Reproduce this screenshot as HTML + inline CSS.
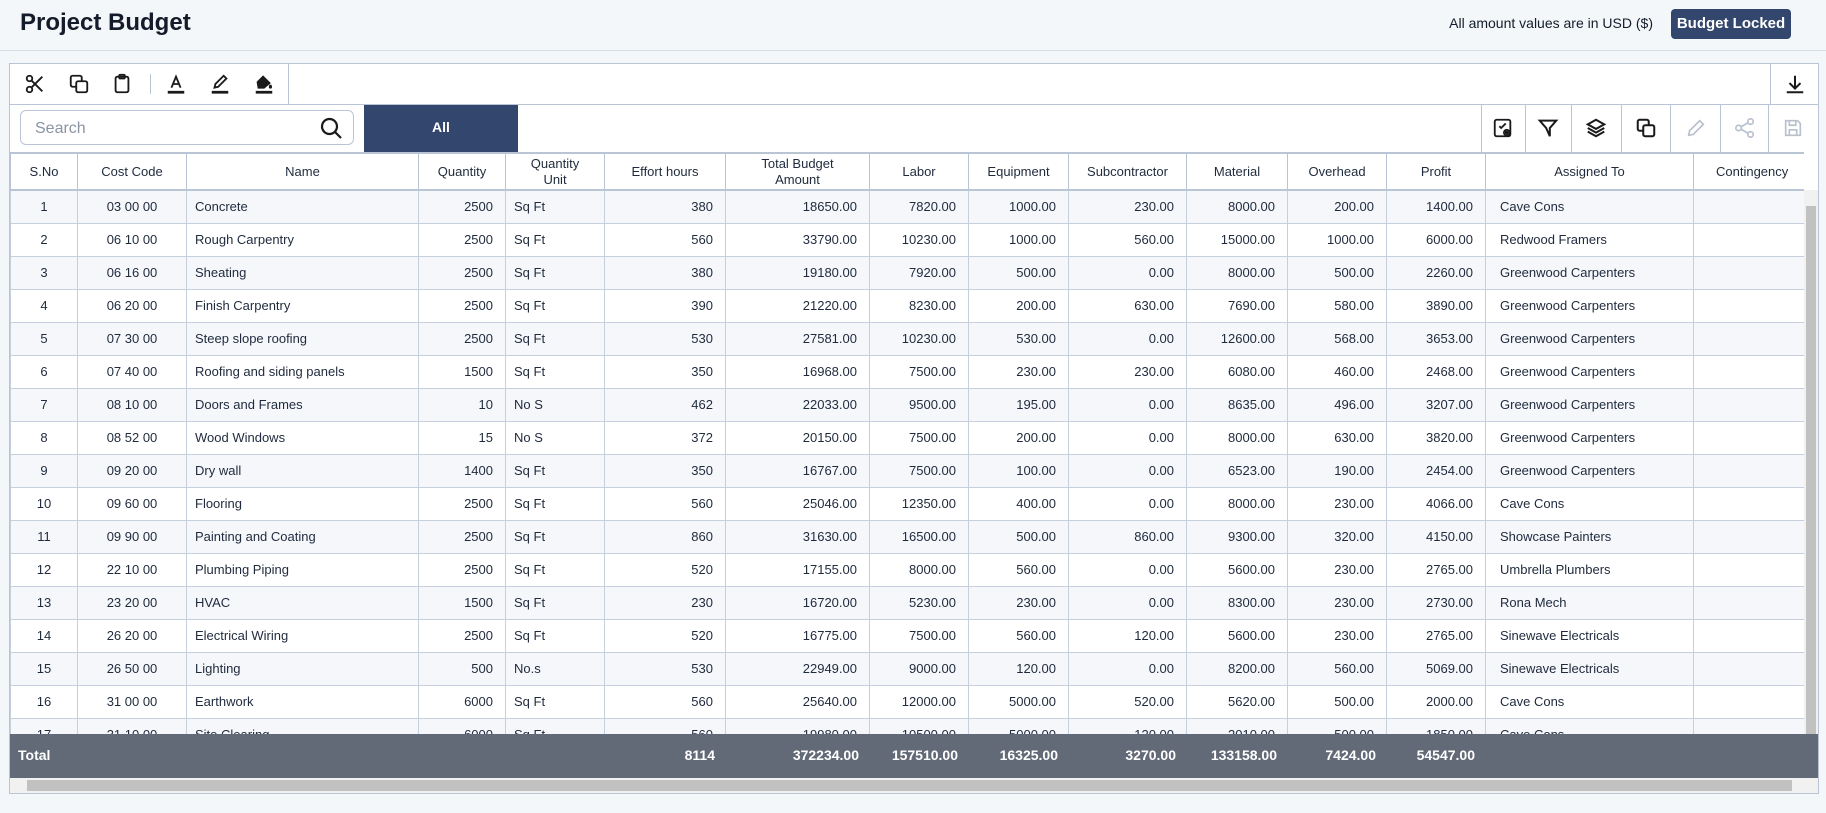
<!DOCTYPE html>
<html><head><meta charset="utf-8"><style>
*{box-sizing:border-box;margin:0;padding:0}
body{width:1826px;height:813px;background:#f4f7fa;font-family:"Liberation Sans",sans-serif;color:#1f2a3c;position:relative;overflow:hidden}
.hdr{position:absolute;left:0;top:0;width:1826px;height:51px;border-bottom:1px solid #d5dce5;background:#f4f7fa}
.title{position:absolute;left:20px;top:9px;font-size:24px;font-weight:bold;color:#141c2b}
.usd{position:absolute;right:173px;top:15px;font-size:14px;color:#141c2b}
.btn{position:absolute;left:1671px;top:9px;width:120px;height:30px;background:#33466d;border-radius:4px;color:#fff;font-weight:bold;font-size:15px;text-align:center;line-height:30px}
.panel{position:absolute;left:9px;top:63px;width:1810px;height:731px;background:#fff;border:1px solid #b9c5d4}
.tb{position:absolute;left:0;top:0;width:1808px;height:41px;border-bottom:1px solid #b9c5d4}
.ic{position:absolute;top:9px;width:22px;height:22px}
.row2{position:absolute;left:0;top:41px;width:1808px;height:47px}
.search{position:absolute;left:10px;top:5px;width:334px;height:35px;border:1px solid #b9c5d4;border-radius:6px;font-size:16px;color:#8a94a3;padding:9px 14px}
.all{position:absolute;left:354px;top:0;width:154px;height:47px;background:#33466d;color:#fff;font-weight:bold;font-size:14px;text-align:center;line-height:44px}
.vd{position:absolute;top:0;height:47px;border-left:1px solid #b9c5d4}
.tw{position:absolute;left:0;top:88px;width:1794px;height:583px;overflow:hidden}
table{border-collapse:collapse;table-layout:fixed;font-size:13px;width:1823px}
th{height:37px;border:1px solid #b9c5d4;border-top:2px solid #b9c5d4;border-bottom:2px solid #b9c5d4;font-weight:normal;font-size:13px;color:#1f2a3c;line-height:16px;background:#fff}
td{height:33px;border:1px solid #c6d0dc;padding:0 12px;white-space:nowrap;color:#1f2a3c}
tr:nth-child(odd) td{background:#f5f7fb}
.c{text-align:center}.r{text-align:right}.l{text-align:left;padding-left:8px}
.total{position:absolute;left:0;top:670px;width:1808px;height:44px;background:#626977;color:#fff;font-weight:bold;font-size:14px}
.total span{position:absolute;top:13px}
.hs{position:absolute;left:0;top:714px;width:1808px;height:15px;background:#f1f1f1}
.thumb{position:absolute;left:17px;top:2px;width:1765px;height:11px;background:#c1c1c1}
.vs{position:absolute;left:1794px;top:126px;width:14px;height:588px;background:#f1f1f1}
.vthumb{position:absolute;left:2px;top:16px;width:10px;height:555px;background:#c1c1c1}
</style></head><body>
<div class="hdr"><div class="title">Project Budget</div><div class="usd">All amount values are in USD ($)</div><div class="btn">Budget Locked</div></div>
<div class="panel">
 <div class="tb">
  <svg class="ic" style="left:14px" viewBox="0 0 24 24" fill="none" stroke="#1a1a1a" stroke-width="2"><circle cx="6" cy="6" r="3"/><circle cx="6" cy="18" r="3"/><path d="M8.1 8.1 20 20M8.1 15.9 20 4"/></svg>
  <svg class="ic" style="left:58px" viewBox="0 0 24 24" fill="none" stroke="#1a1a1a" stroke-width="2"><rect x="3" y="3" width="12" height="12" rx="2"/><rect x="9" y="9" width="12" height="12" rx="2" fill="#fff"/></svg>
  <svg class="ic" style="left:101px" viewBox="0 0 24 24" fill="none" stroke="#1a1a1a" stroke-width="2"><rect x="5" y="4" width="14" height="17" rx="2"/><rect x="9" y="2" width="6" height="4" rx="1"/></svg>
  <div style="position:absolute;left:140px;top:10px;height:20px;border-left:1px solid #b9c5d4"></div>
  <svg class="ic" style="left:155px" viewBox="0 0 24 24" fill="none" stroke="#1a1a1a" stroke-width="2"><path d="M7 16 12 4l5 12M9 12h6"/><path d="M3 21h18" stroke-width="3"/></svg>
  <svg class="ic" style="left:199px" viewBox="0 0 24 24" fill="none" stroke="#1a1a1a" stroke-width="2"><path d="M6 16l1-4 9-9 3 3-9 9z"/><path d="M3 21h18" stroke-width="3"/></svg>
  <svg class="ic" style="left:243px" viewBox="0 0 24 24" fill="none" stroke="#1a1a1a" stroke-width="2"><path d="M5 10l6-6 7 7-6 5H6z" fill="#1a1a1a"/><path d="M19 13c1 2 1 3 0 3s-1-1 0-3"/><path d="M3 21h18" stroke-width="3"/></svg>
  <div style="position:absolute;left:278px;top:0;height:40px;border-left:1px solid #b9c5d4"></div>
  <div style="position:absolute;left:1760px;top:0;height:40px;border-left:1px solid #b9c5d4"></div>
  <svg class="ic" style="left:1774px" viewBox="0 0 24 24" fill="none" stroke="#1a1a1a" stroke-width="2.2"><path d="M12 3v13M6 11l6 6 6-6M3 21h18"/></svg>
 </div>
 <div class="row2">
  <div class="search">Search</div>
  <svg style="position:absolute;left:309px;top:11px;width:24px;height:24px" viewBox="0 0 24 24" fill="none" stroke="#1a1a1a" stroke-width="2.2"><circle cx="10.5" cy="10.5" r="7.5"/><path d="M16 16l6 6"/></svg>
  <div class="all">All</div>
  <div class="vd" style="left:1471px"></div><div class="vd" style="left:1515px"></div><div class="vd" style="left:1561px"></div><div class="vd" style="left:1611px"></div><div class="vd" style="left:1660px"></div><div class="vd" style="left:1710px"></div><div class="vd" style="left:1758px"></div>
  <svg class="ic" style="left:1482px;top:12px" viewBox="0 0 24 24" fill="none" stroke="#1a1a1a" stroke-width="2"><rect x="3" y="3" width="17" height="18" rx="2"/><path d="M8 10l2 2 5-5"/><circle cx="16" cy="17" r="3" fill="#fff"/><circle cx="16" cy="17" r="1"/></svg>
  <svg class="ic" style="left:1527px;top:12px" viewBox="0 0 24 24" fill="none" stroke="#1a1a1a" stroke-width="2.2"><path d="M3 4h18l-7 8v9l-4-9z"/></svg>
  <svg class="ic" style="left:1575px;top:12px" viewBox="0 0 24 24" fill="none" stroke="#1a1a1a" stroke-width="2.2"><path d="M12 3l9 5-9 5-9-5z"/><path d="M3 12l9 5 9-5M3 16l9 5 9-5"/></svg>
  <svg class="ic" style="left:1625px;top:12px" viewBox="0 0 24 24" fill="none" stroke="#1a1a1a" stroke-width="2.2"><rect x="3" y="3" width="12" height="12" rx="2"/><rect x="9" y="9" width="12" height="12" rx="2" fill="#fff"/></svg>
  <svg class="ic" style="left:1675px;top:12px" viewBox="0 0 24 24" fill="none" stroke="#b8c0cc" stroke-width="1.8"><path d="M4 20l1-5L16 4l4 4L9 19z"/></svg>
  <svg class="ic" style="left:1724px;top:12px" viewBox="0 0 24 24" fill="none" stroke="#b8c0cc" stroke-width="1.8"><circle cx="18" cy="5" r="3"/><circle cx="5" cy="12" r="3"/><circle cx="18" cy="19" r="3"/><path d="M8 10.5l7-4M8 13.5l7 4"/></svg>
  <svg class="ic" style="left:1772px;top:12px" viewBox="0 0 24 24" fill="none" stroke="#b8c0cc" stroke-width="1.8"><path d="M4 4h13l3 3v13H4z"/><path d="M8 4v5h7V4M8 20v-6h8v6"/></svg>
 </div>
 <div class="tw"><table>
 <colgroup><col style="width:67px"><col style="width:109px"><col style="width:232px"><col style="width:87px"><col style="width:99px"><col style="width:121px"><col style="width:144px"><col style="width:99px"><col style="width:100px"><col style="width:118px"><col style="width:101px"><col style="width:99px"><col style="width:99px"><col style="width:208px"><col style="width:140px"></colgroup>
 <thead><tr><th>S.No</th><th>Cost Code</th><th>Name</th><th>Quantity</th><th>Quantity<br>Unit</th><th>Effort hours</th><th>Total Budget<br>Amount</th><th>Labor</th><th>Equipment</th><th>Subcontractor</th><th>Material</th><th>Overhead</th><th>Profit</th><th>Assigned To</th><th style="text-align:left;padding-left:22px">Contingency</th></tr></thead>
 <tbody>
<tr><td class="c">1</td><td class="c">03 00 00</td><td class="l">Concrete</td><td class="r">2500</td><td class="l">Sq Ft</td><td class="r">380</td><td class="r">18650.00</td><td class="r">7820.00</td><td class="r">1000.00</td><td class="r">230.00</td><td class="r">8000.00</td><td class="r">200.00</td><td class="r">1400.00</td><td class="l" style="padding-left:14px">Cave Cons</td><td></td></tr>
<tr><td class="c">2</td><td class="c">06 10 00</td><td class="l">Rough Carpentry</td><td class="r">2500</td><td class="l">Sq Ft</td><td class="r">560</td><td class="r">33790.00</td><td class="r">10230.00</td><td class="r">1000.00</td><td class="r">560.00</td><td class="r">15000.00</td><td class="r">1000.00</td><td class="r">6000.00</td><td class="l" style="padding-left:14px">Redwood Framers</td><td></td></tr>
<tr><td class="c">3</td><td class="c">06 16 00</td><td class="l">Sheating</td><td class="r">2500</td><td class="l">Sq Ft</td><td class="r">380</td><td class="r">19180.00</td><td class="r">7920.00</td><td class="r">500.00</td><td class="r">0.00</td><td class="r">8000.00</td><td class="r">500.00</td><td class="r">2260.00</td><td class="l" style="padding-left:14px">Greenwood Carpenters</td><td></td></tr>
<tr><td class="c">4</td><td class="c">06 20 00</td><td class="l">Finish Carpentry</td><td class="r">2500</td><td class="l">Sq Ft</td><td class="r">390</td><td class="r">21220.00</td><td class="r">8230.00</td><td class="r">200.00</td><td class="r">630.00</td><td class="r">7690.00</td><td class="r">580.00</td><td class="r">3890.00</td><td class="l" style="padding-left:14px">Greenwood Carpenters</td><td></td></tr>
<tr><td class="c">5</td><td class="c">07 30 00</td><td class="l">Steep slope roofing</td><td class="r">2500</td><td class="l">Sq Ft</td><td class="r">530</td><td class="r">27581.00</td><td class="r">10230.00</td><td class="r">530.00</td><td class="r">0.00</td><td class="r">12600.00</td><td class="r">568.00</td><td class="r">3653.00</td><td class="l" style="padding-left:14px">Greenwood Carpenters</td><td></td></tr>
<tr><td class="c">6</td><td class="c">07 40 00</td><td class="l">Roofing and siding panels</td><td class="r">1500</td><td class="l">Sq Ft</td><td class="r">350</td><td class="r">16968.00</td><td class="r">7500.00</td><td class="r">230.00</td><td class="r">230.00</td><td class="r">6080.00</td><td class="r">460.00</td><td class="r">2468.00</td><td class="l" style="padding-left:14px">Greenwood Carpenters</td><td></td></tr>
<tr><td class="c">7</td><td class="c">08 10 00</td><td class="l">Doors and Frames</td><td class="r">10</td><td class="l">No S</td><td class="r">462</td><td class="r">22033.00</td><td class="r">9500.00</td><td class="r">195.00</td><td class="r">0.00</td><td class="r">8635.00</td><td class="r">496.00</td><td class="r">3207.00</td><td class="l" style="padding-left:14px">Greenwood Carpenters</td><td></td></tr>
<tr><td class="c">8</td><td class="c">08 52 00</td><td class="l">Wood Windows</td><td class="r">15</td><td class="l">No S</td><td class="r">372</td><td class="r">20150.00</td><td class="r">7500.00</td><td class="r">200.00</td><td class="r">0.00</td><td class="r">8000.00</td><td class="r">630.00</td><td class="r">3820.00</td><td class="l" style="padding-left:14px">Greenwood Carpenters</td><td></td></tr>
<tr><td class="c">9</td><td class="c">09 20 00</td><td class="l">Dry wall</td><td class="r">1400</td><td class="l">Sq Ft</td><td class="r">350</td><td class="r">16767.00</td><td class="r">7500.00</td><td class="r">100.00</td><td class="r">0.00</td><td class="r">6523.00</td><td class="r">190.00</td><td class="r">2454.00</td><td class="l" style="padding-left:14px">Greenwood Carpenters</td><td></td></tr>
<tr><td class="c">10</td><td class="c">09 60 00</td><td class="l">Flooring</td><td class="r">2500</td><td class="l">Sq Ft</td><td class="r">560</td><td class="r">25046.00</td><td class="r">12350.00</td><td class="r">400.00</td><td class="r">0.00</td><td class="r">8000.00</td><td class="r">230.00</td><td class="r">4066.00</td><td class="l" style="padding-left:14px">Cave Cons</td><td></td></tr>
<tr><td class="c">11</td><td class="c">09 90 00</td><td class="l">Painting and Coating</td><td class="r">2500</td><td class="l">Sq Ft</td><td class="r">860</td><td class="r">31630.00</td><td class="r">16500.00</td><td class="r">500.00</td><td class="r">860.00</td><td class="r">9300.00</td><td class="r">320.00</td><td class="r">4150.00</td><td class="l" style="padding-left:14px">Showcase Painters</td><td></td></tr>
<tr><td class="c">12</td><td class="c">22 10 00</td><td class="l">Plumbing Piping</td><td class="r">2500</td><td class="l">Sq Ft</td><td class="r">520</td><td class="r">17155.00</td><td class="r">8000.00</td><td class="r">560.00</td><td class="r">0.00</td><td class="r">5600.00</td><td class="r">230.00</td><td class="r">2765.00</td><td class="l" style="padding-left:14px">Umbrella Plumbers</td><td></td></tr>
<tr><td class="c">13</td><td class="c">23 20 00</td><td class="l">HVAC</td><td class="r">1500</td><td class="l">Sq Ft</td><td class="r">230</td><td class="r">16720.00</td><td class="r">5230.00</td><td class="r">230.00</td><td class="r">0.00</td><td class="r">8300.00</td><td class="r">230.00</td><td class="r">2730.00</td><td class="l" style="padding-left:14px">Rona Mech</td><td></td></tr>
<tr><td class="c">14</td><td class="c">26 20 00</td><td class="l">Electrical Wiring</td><td class="r">2500</td><td class="l">Sq Ft</td><td class="r">520</td><td class="r">16775.00</td><td class="r">7500.00</td><td class="r">560.00</td><td class="r">120.00</td><td class="r">5600.00</td><td class="r">230.00</td><td class="r">2765.00</td><td class="l" style="padding-left:14px">Sinewave Electricals</td><td></td></tr>
<tr><td class="c">15</td><td class="c">26 50 00</td><td class="l">Lighting</td><td class="r">500</td><td class="l">No.s</td><td class="r">530</td><td class="r">22949.00</td><td class="r">9000.00</td><td class="r">120.00</td><td class="r">0.00</td><td class="r">8200.00</td><td class="r">560.00</td><td class="r">5069.00</td><td class="l" style="padding-left:14px">Sinewave Electricals</td><td></td></tr>
<tr><td class="c">16</td><td class="c">31 00 00</td><td class="l">Earthwork</td><td class="r">6000</td><td class="l">Sq Ft</td><td class="r">560</td><td class="r">25640.00</td><td class="r">12000.00</td><td class="r">5000.00</td><td class="r">520.00</td><td class="r">5620.00</td><td class="r">500.00</td><td class="r">2000.00</td><td class="l" style="padding-left:14px">Cave Cons</td><td></td></tr>
<tr><td class="c">17</td><td class="c">31 10 00</td><td class="l">Site Clearing</td><td class="r">6000</td><td class="l">Sq Ft</td><td class="r">560</td><td class="r">19980.00</td><td class="r">10500.00</td><td class="r">5000.00</td><td class="r">120.00</td><td class="r">2010.00</td><td class="r">500.00</td><td class="r">1850.00</td><td class="l" style="padding-left:14px">Cave Cons</td><td></td></tr>
 </tbody></table></div>
 <div class="vs"><div class="vthumb"></div></div>
 <div class="total"><span style="left:8px">Total</span><span style="right:1103px">8114</span><span style="right:959px">372234.00</span><span style="right:860px">157510.00</span><span style="right:760px">16325.00</span><span style="right:642px">3270.00</span><span style="right:541px">133158.00</span><span style="right:442px">7424.00</span><span style="right:343px">54547.00</span></div>
 <div class="hs"><div class="thumb"></div></div>
</div>
</body></html>
